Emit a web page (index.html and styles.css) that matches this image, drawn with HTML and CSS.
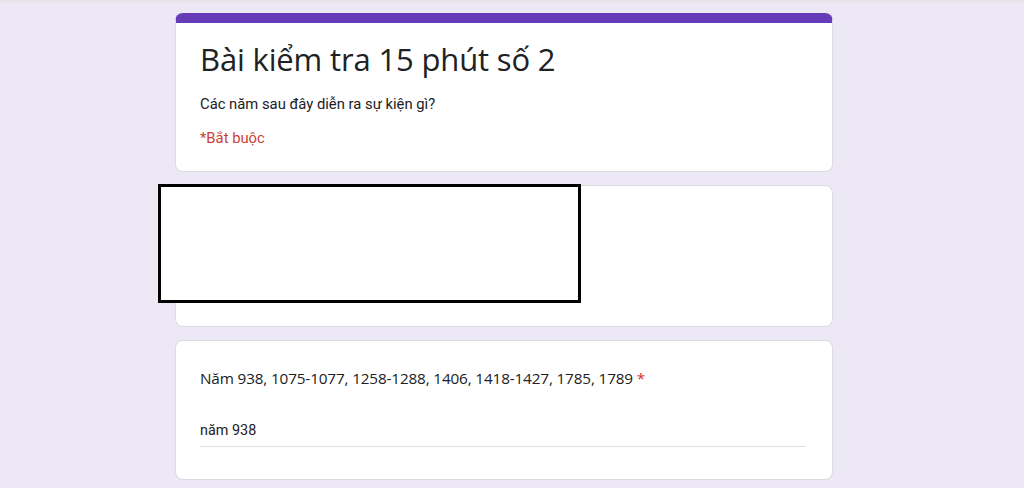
FILE: index.html
```html
<!DOCTYPE html>
<html lang="vi">
<head>
<meta charset="utf-8">
<title>Bài kiểm tra 15 phút số 2</title>
<link rel="stylesheet" href="styles.css">
</head>
<body>
<div class="topline"></div>
<main class="page">
  <section class="card header-card">
    <h1 class="title">Bài kiểm tra 15 phút số 2</h1>
    <p class="desc">Các năm sau đây diễn ra sự kiện gì?</p>
    <p class="required">*Bắt buộc</p>
  </section>
  <section class="card blank-card"></section>
  <section class="card question-card">
    <div class="question">Năm 938, 1075-1077, 1258-1288, 1406, 1418-1427, 1785, 1789 <span class="star">*</span></div>
    <div class="answer">năm 938</div>
  </section>
  <div class="redact"></div>
</main>
</body>
</html>
```
FILE: styles.css
```css
html, body {
  margin: 0;
  padding: 0;
}
body {
  background: #ede8f6;
  font-family: Roboto, "Noto Sans", Arial, sans-serif;
  color: #202124;
  height: 488px;
  overflow: hidden;
}
.topline {
  height: 2px;
  background: #e6e3ea;
}
.page {
  position: relative;
  width: 658px;
  margin-left: 175px;
  padding-top: 11px;
  display: flex;
  flex-direction: column;
  gap: 13px;
}
.card {
  background: #fff;
  border: 1px solid #dadce0;
  border-radius: 8px;
  box-sizing: border-box;
}
.header-card {
  border-top: 10px solid #673ab7;
  height: 159px;
  padding: 12px 24px 0 24px;
}
.title {
  margin: 0;
  font-family: "Open Sans", Roboto, sans-serif;
  font-weight: 400;
  font-size: 31px;
  line-height: 48px;
  letter-spacing: -0.15px;
  color: #202124;
}
.desc {
  margin: 11px 0 0;
  font-size: 14.8px;
  line-height: 20px;
  color: #202124;
}
.required {
  margin: 14px 0 0;
  font-size: 14.8px;
  line-height: 20px;
  color: #cc3f36;
}
.blank-card {
  height: 142px;
}
.question-card {
  height: 140px;
  padding: 25px 24px 0 24px;
}
.question {
  font-family: "Open Sans", Roboto, sans-serif;
  font-size: 15.3px;
  line-height: 24px;
  letter-spacing: -0.15px;
  color: #202124;
}
.star {
  color: #d93025;
}
.answer {
  margin-top: 31px;
  width: 606px;
  font-size: 14.4px;
  line-height: 20px;
  padding-bottom: 5px;
  border-bottom: 1px solid #e0e0e0;
  color: #202124;
}
.redact {
  position: absolute;
  left: -17px;
  top: 182px;
  width: 417px;
  height: 113px;
  background: #fff;
  border: 3px solid #000;
}
```
